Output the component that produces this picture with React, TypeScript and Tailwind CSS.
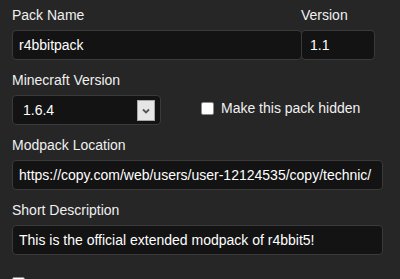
import React from "react";

const font = { fontFamily: '"Liberation Sans", Arial, sans-serif' };

function Label({ children }: { children: React.ReactNode }) {
  return <div className="text-[14px] leading-5 text-[#f0f0f0] h-5">{children}</div>;
}

function TextBox({ value, className = "" }: { value: string; className?: string }) {
  return (
    <input
      readOnly
      defaultValue={value}
      className={
        "h-[30px] rounded-[4px] border border-[#3a3a3a] bg-[#131313] px-[6px] text-[14px] text-white outline-none " +
        className
      }
      style={font}
    />
  );
}

export default function App() {
  return (
    <div
      className="w-[400px] h-[279px] overflow-hidden bg-[#262626] pl-[12px] pt-[5px] flex flex-col"
      style={font}
    >
      {/* Row 1 */}
      <div className="flex">
        <div className="flex flex-col w-[290px]">
          <Label>Pack Name</Label>
          <TextBox value="r4bbitpack" className="mt-[5px] w-[290px]" />
        </div>
        <div className="flex flex-col w-[74px] -ml-px">
          <Label>Version</Label>
          <TextBox value="1.1" className="mt-[5px] w-[74px] pl-[8px]" />
        </div>
      </div>

      {/* Row 2 */}
      <div className="mt-[10px]">
        <Label>Minecraft Version</Label>
        <div className="mt-[5px] flex items-center">
          <div className="relative h-[30px] w-[149px] rounded-[4px] border border-[#3a3a3a] bg-[#131313] flex items-center pl-[10px] text-[14px] text-white">
            1.6.4
            <div className="absolute right-[5px] top-[4px] w-[18px] h-[21px] bg-[#e6e6e6] border border-[#a8a8a8] flex items-center justify-center">
              <svg width="8" height="6" viewBox="0 0 8 6">
                <path d="M1 1.5 L4 4.5 L7 1.5" stroke="#555" strokeWidth="1.8" fill="none" />
              </svg>
            </div>
          </div>
          <div className="ml-[40px] -mt-[3px] w-[13px] h-[13px] bg-white border border-[#8a8a8a] rounded-[2px]" />
          <span className="ml-[7px] -mt-[4px] text-[14px] text-[#f0f0f0]">Make this pack hidden</span>
        </div>
      </div>

      {/* Row 3 */}
      <div className="mt-[10px] flex flex-col">
        <Label>Modpack Location</Label>
        <TextBox
          value="https://copy.com/web/users/user-12124535/copy/technic/"
          className="mt-[5px] w-[371px]"
        />
      </div>

      {/* Row 4 */}
      <div className="mt-[10px] flex flex-col">
        <Label>Short Description</Label>
        <TextBox value="This is the official extended modpack of r4bbit5!" className="mt-[5px] w-[371px]" />
      </div>

      {/* Row 5 */}
      <div className="mt-[22px] flex items-start shrink-0">
        <div className="w-[13px] h-[13px] bg-white border border-[#8a8a8a] rounded-[2px] shrink-0" />
        <span className="ml-[7px] -mt-[2px] text-[14px] leading-5 text-[#f0f0f0]">Force Piracy Sign</span>
      </div>
    </div>
  );
}
